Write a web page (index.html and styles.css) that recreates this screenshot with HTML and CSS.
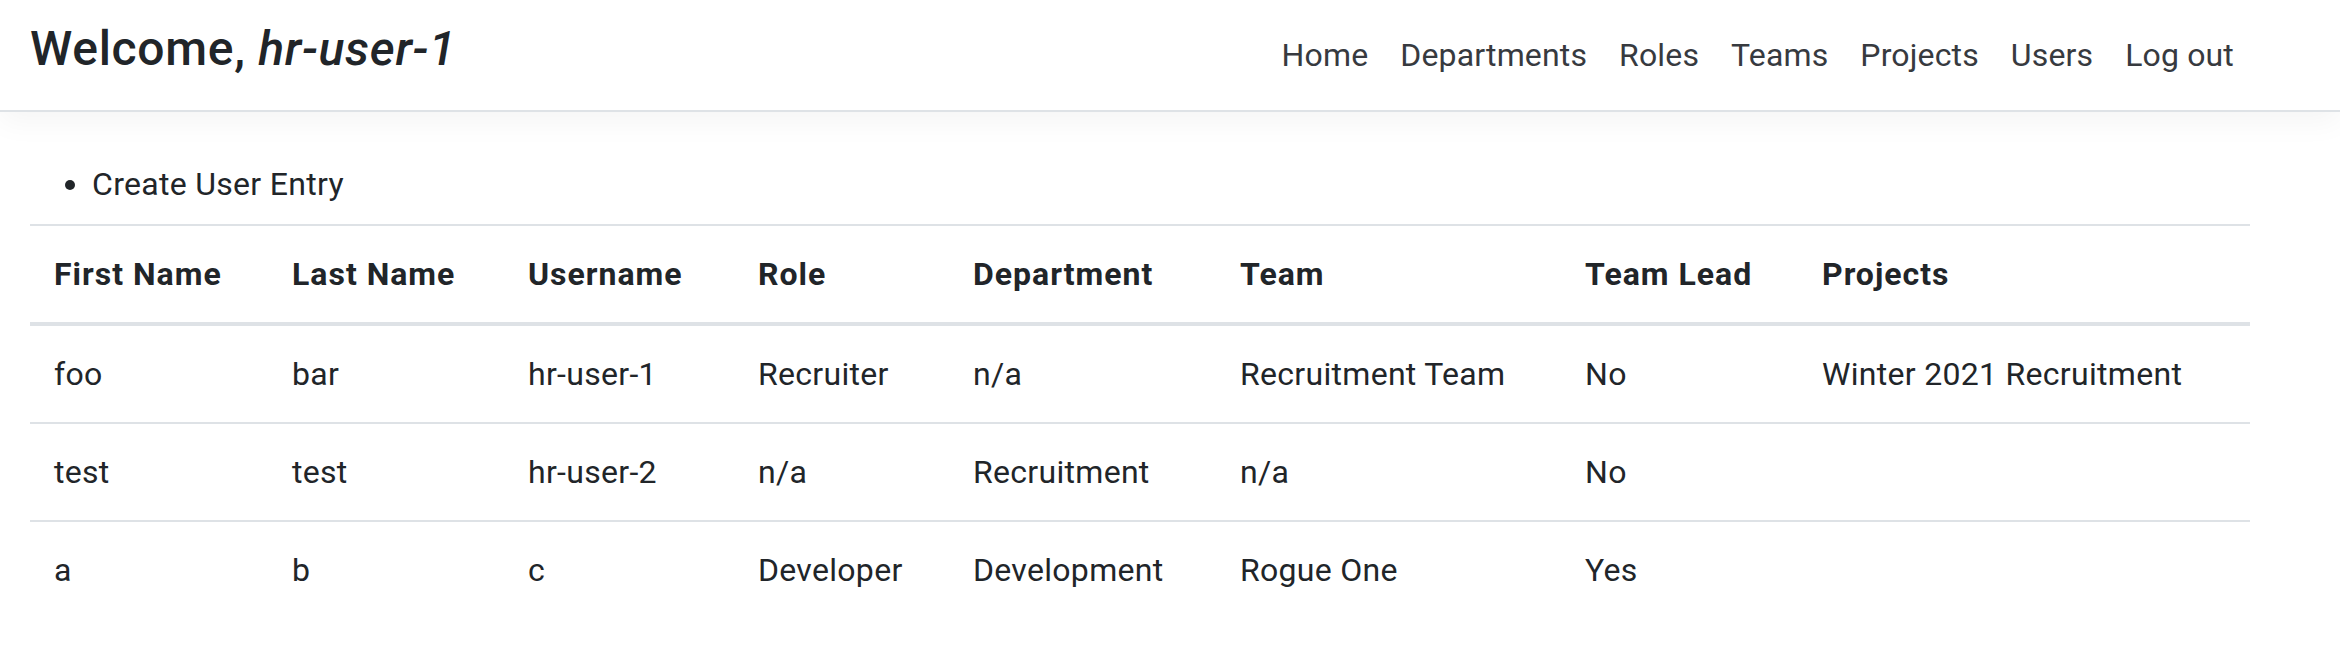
FILE: index.html
```html
<!DOCTYPE html>
<html lang="en">
<head>
<meta charset="utf-8">
<title>Users</title>
<link rel="stylesheet" href="styles.css">
</head>
<body>
<header class="navbar">
  <div class="nav-inner">
    <h4 class="welcome">Welcome, <em>hr-user-1</em></h4>
    <ul class="nav-links">
      <li><a href="#">Home</a></li>
      <li><a href="#">Departments</a></li>
      <li><a href="#">Roles</a></li>
      <li><a href="#">Teams</a></li>
      <li><a href="#">Projects</a></li>
      <li><a href="#">Users</a></li>
      <li><a href="#">Log out</a></li>
    </ul>
  </div>
</header>
<main class="content">
  <ul class="actions">
    <li><a href="#">Create User Entry</a></li>
  </ul>
  <table class="table">
    <colgroup>
      <col class="c1"><col class="c2"><col class="c3"><col class="c4">
      <col class="c5"><col class="c6"><col class="c7"><col class="c8">
    </colgroup>
    <thead>
      <tr>
        <th>First Name</th><th>Last Name</th><th>Username</th><th>Role</th>
        <th>Department</th><th>Team</th><th>Team Lead</th><th>Projects</th>
      </tr>
    </thead>
    <tbody>
      <tr>
        <td>foo</td><td>bar</td><td>hr-user-1</td><td>Recruiter</td>
        <td>n/a</td><td>Recruitment Team</td><td>No</td><td>Winter 2021 Recruitment</td>
      </tr>
      <tr>
        <td>test</td><td>test</td><td>hr-user-2</td><td>n/a</td>
        <td>Recruitment</td><td>n/a</td><td>No</td><td></td>
      </tr>
      <tr>
        <td>a</td><td>b</td><td>c</td><td>Developer</td>
        <td>Development</td><td>Rogue One</td><td>Yes</td><td></td>
      </tr>
    </tbody>
  </table>
</main>
</body>
</html>
```

FILE: styles.css
```css
* { box-sizing: border-box; }

html, body {
  margin: 0;
  padding: 0;
  background: #fff;
}

body {
  font-family: Roboto, "Liberation Sans", Arial, sans-serif;
  font-size: 32px;
  line-height: 48px;
  letter-spacing: 0.3px;
  color: #212529;
}

a {
  color: inherit;
  text-decoration: none;
}

.navbar {
  height: 112px;
  border-bottom: 2px solid #dee2e6;
  box-shadow: 0 10px 28px rgba(0, 0, 0, 0.045);
  background: #fff;
  position: relative;
}

.nav-inner {
  margin-left: 30px;
  width: 2220px;
  display: flex;
  justify-content: space-between;
  align-items: flex-start;
}

.welcome {
  margin: 0;
  padding-top: 20px;
  font-size: 48px;
  line-height: 57.6px;
  font-weight: 500;
  letter-spacing: 0.7px;
  color: #212529;
}

.welcome em {
  font-style: italic;
}

.nav-links {
  list-style: none;
  margin: 0;
  padding: 15px 0 0;
  display: flex;
}

.nav-links a {
  display: block;
  padding: 16px;
  letter-spacing: 0.15px;
  color: #373a3f;
}

.content {
  margin-left: 30px;
  width: 2220px;
  padding-top: 48px;
}

.actions {
  margin: 0 0 16px;
  padding-left: 62px;
}

.table {
  width: 100%;
  border-collapse: collapse;
}

.c1 { width: 238px; }
.c2 { width: 236px; }
.c3 { width: 230px; }
.c4 { width: 215px; }
.c5 { width: 267px; }
.c6 { width: 345px; }
.c7 { width: 237px; }
.c8 { width: auto; }

.table th,
.table td {
  padding: 24px;
  text-align: left;
  vertical-align: top;
  border-top: 2px solid #dee2e6;
  white-space: nowrap;
}

.table th {
  font-weight: 700;
  letter-spacing: 1px;
  vertical-align: bottom;
  border-bottom: 4px solid #dee2e6;
}

.table tbody tr:first-child td {
  border-top: 4px solid #dee2e6;
}
```
